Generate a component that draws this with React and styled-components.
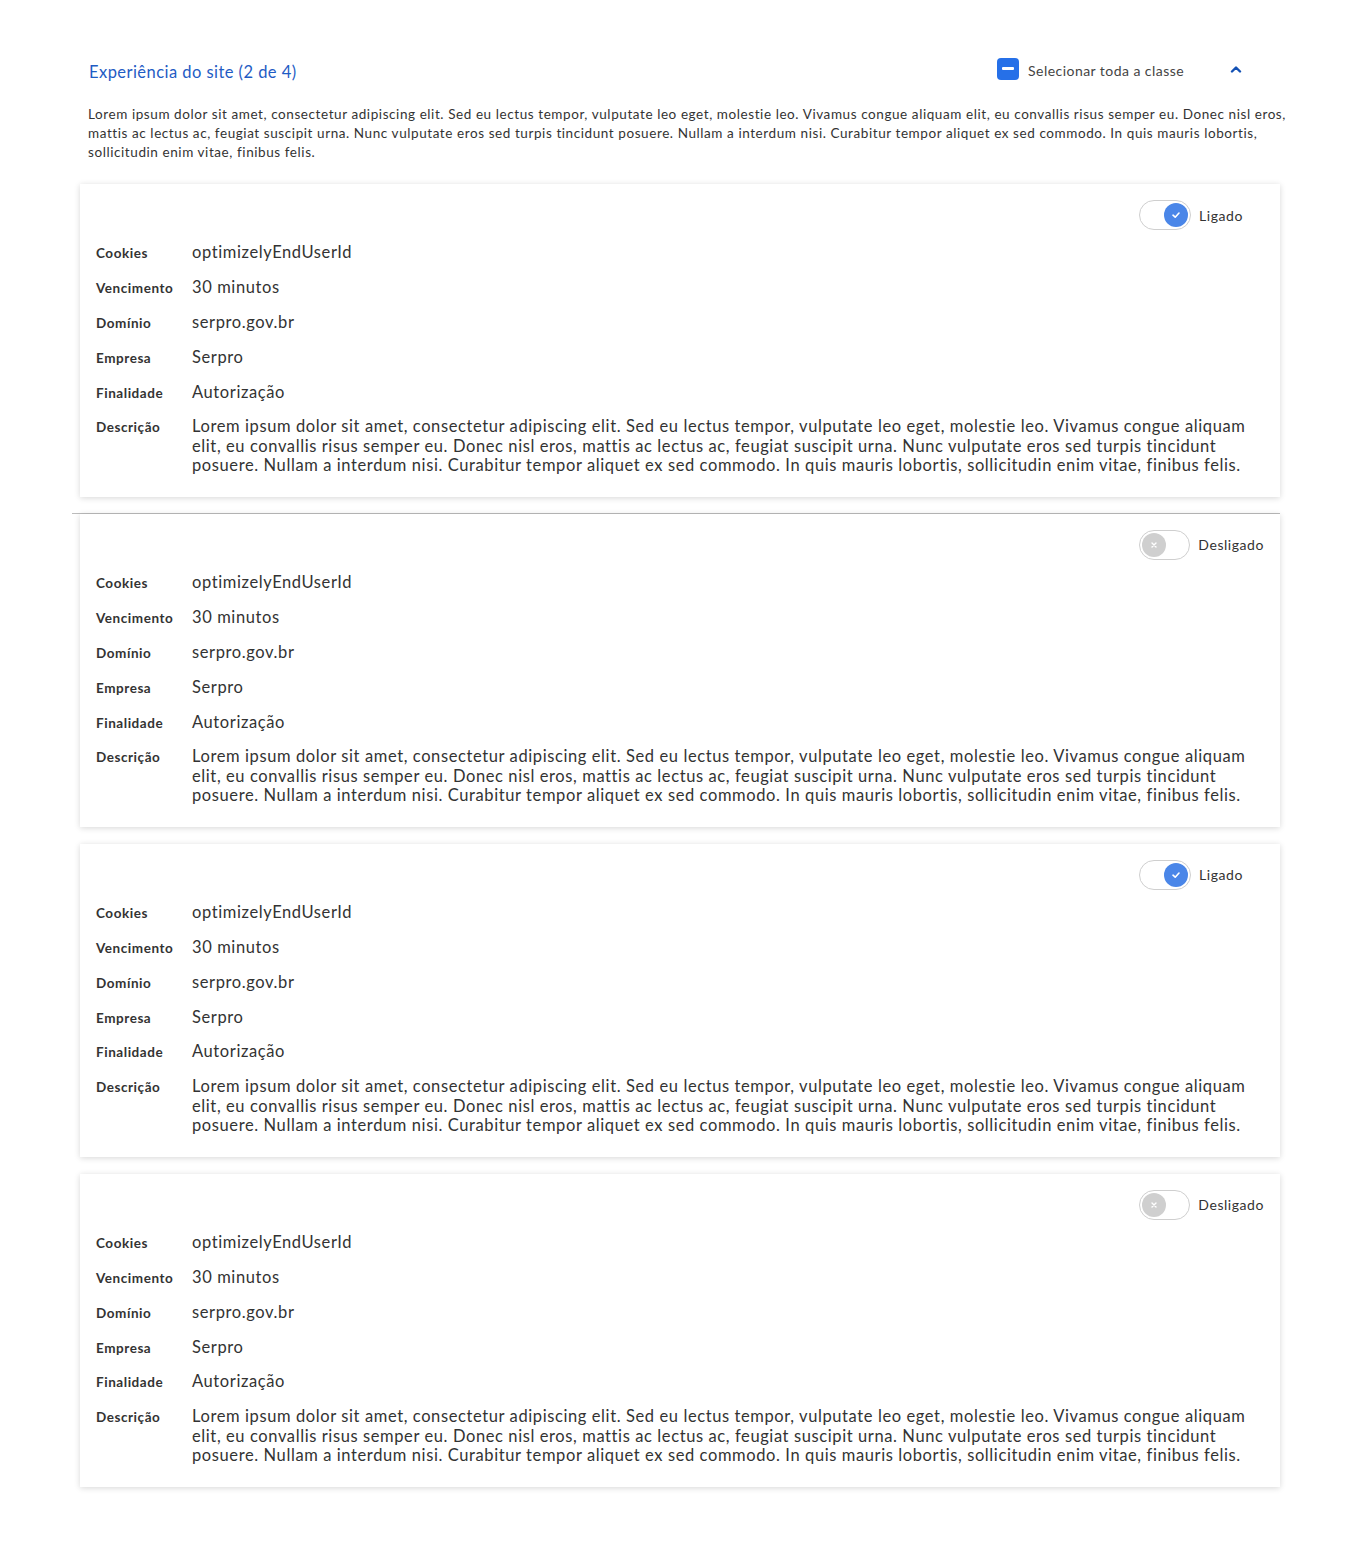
import React from 'react';
import styled, { createGlobalStyle } from 'styled-components';

const GlobalStyle = createGlobalStyle`
  body {
    margin: 0;
    background: #fff;
    font-family: 'Lato', 'Open Sans', sans-serif;
    color: #333;
  }
`;

const LOREM_LINES = [
  'Lorem ipsum dolor sit amet, consectetur adipiscing elit. Sed eu lectus tempor, vulputate leo eget, molestie leo. Vivamus congue aliquam',
  'elit, eu convallis risus semper eu. Donec nisl eros, mattis ac lectus ac, feugiat suscipit urna. Nunc vulputate eros sed turpis tincidunt',
  'posuere. Nullam a interdum nisi. Curabitur tempor aliquet ex sed commodo. In quis mauris lobortis, sollicitudin enim vitae, finibus felis.'
];

const INTRO_LINES = [
  'Lorem ipsum dolor sit amet, consectetur adipiscing elit. Sed eu lectus tempor, vulputate leo eget, molestie leo. Vivamus congue aliquam elit, eu convallis risus semper eu. Donec nisl eros,',
  'mattis ac lectus ac, feugiat suscipit urna. Nunc vulputate eros sed turpis tincidunt posuere. Nullam a interdum nisi. Curabitur tempor aliquet ex sed commodo. In quis mauris lobortis,',
  'sollicitudin enim vitae, finibus felis.'
];

const COOKIES = [
  { on: true, divider: false },
  { on: false, divider: true },
  { on: true, divider: false },
  { on: false, divider: false }
];

const Page = styled.div`
  padding: 50px 0 60px 80px;
  width: 1200px;
`;

const Header = styled.div`
  display: flex;
  align-items: center;
  padding: 0 0 0 9px;
  height: 40px;
`;

const Title = styled.h2`
  margin: 4px 0 0;
  font-size: 16.5px;
  font-weight: 400;
  letter-spacing: 0.45px;
  color: #1f5cc4;
  flex: 1;
`;

const SelectAll = styled.label`
  display: flex;
  align-items: center;
  gap: 9px;
  font-size: 14px;
  letter-spacing: 0.45px;
  color: #444;
  cursor: pointer;
`;

const CheckBox = styled.span`
  width: 22px;
  height: 22px;
  margin-top: -3px;
  border-radius: 4px;
  background: #2670e8;
  display: flex;
  align-items: center;
  justify-content: center;
  &::after {
    content: '';
    width: 12px;
    height: 3px;
    border-radius: 1px;
    background: #fff;
  }
`;

const Chevron = styled.button`
  border: 0;
  background: none;
  padding: 0;
  margin: -3px 38px 0 46px;
  width: 12px;
  height: 12px;
  display: flex;
  align-items: center;
  justify-content: center;
  cursor: pointer;
`;

const Intro = styled.p`
  margin: 15px 0 0 8px;
  font-size: 13.5px;
  letter-spacing: 0.58px;
  line-height: 19px;
  color: #333;
  white-space: nowrap;
`;

const Line = styled.span`
  display: block;
`;

const List = styled.div`
  margin-top: 21px;
`;

const CardWrap = styled.div`
  & + & {
    margin-top: 16px;
  }
`;

const Divider = styled.div`
  height: 1px;
  margin-left: -8px;
  background: ${(props) => (props.visible ? '#bcbcbc' : 'transparent')};
`;

const Card = styled.section`
  background: #fff;
  box-shadow: 0 1px 6px rgba(0, 0, 0, 0.16);
  padding: 16px 16px 21px;
`;

const ToggleRow = styled.div`
  display: flex;
  justify-content: flex-end;
`;

const ToggleGroup = styled.div`
  width: 125px;
  display: flex;
  align-items: center;
  gap: 8px;
  font-size: 14px;
  letter-spacing: 0.55px;
  color: #333;
`;

const Track = styled.span`
  box-sizing: border-box;
  width: 52px;
  height: 30px;
  border: 1px solid #cfcfcf;
  border-radius: 15px;
  display: flex;
  align-items: center;
  justify-content: ${(props) => (props.on ? 'flex-end' : 'flex-start')};
  padding: 0 2px;
`;

const Knob = styled.span`
  width: 24px;
  height: 24px;
  border-radius: 50%;
  background: ${(props) => (props.on ? '#4a86e8' : '#cfcfcf')};
  display: flex;
  align-items: center;
  justify-content: center;
`;

const Rows = styled.dl`
  margin: 13px 0 0;
  display: grid;
  grid-template-columns: 96px 1fr;
  row-gap: 15.4px;
  align-items: baseline;
`;

const Term = styled.dt`
  font-size: 13.5px;
  font-weight: 700;
  letter-spacing: 0.55px;
  color: #333;
`;

const Value = styled.dd`
  margin: 0;
  font-size: 16.5px;
  letter-spacing: 0.6px;
  line-height: 19.5px;
  color: #333;
  white-space: nowrap;
`;

const Toggle = ({ on }) => (
  <ToggleGroup>
    <Track on={on}>
      <Knob on={on}>
        {on ? (
          <svg width="10" height="10" viewBox="0 0 10 10">
            <path d="M2 5.2 L4.2 7.2 L8 3" fill="none" stroke="#fff" strokeWidth="1.6" strokeLinecap="round" strokeLinejoin="round" />
          </svg>
        ) : (
          <svg width="8" height="8" viewBox="0 0 8 8">
            <path d="M2 2 L6 6 M6 2 L2 6" stroke="#fff" strokeWidth="1.4" strokeLinecap="round" />
          </svg>
        )}
      </Knob>
    </Track>
    {on ? 'Ligado' : 'Desligado'}
  </ToggleGroup>
);

const CookieCard = ({ on }) => (
  <Card>
    <ToggleRow>
      <Toggle on={on} />
    </ToggleRow>
    <Rows>
      <Term>Cookies</Term>
      <Value>optimizelyEndUserId</Value>
      <Term>Vencimento</Term>
      <Value>30 minutos</Value>
      <Term>Domínio</Term>
      <Value>serpro.gov.br</Value>
      <Term>Empresa</Term>
      <Value>Serpro</Value>
      <Term>Finalidade</Term>
      <Value>Autorização</Value>
      <Term>Descrição</Term>
      <Value>
        {LOREM_LINES.map((l) => <Line key={l}>{l}</Line>)}
      </Value>
    </Rows>
  </Card>
);

const App = () => (
  <>
    <GlobalStyle />
    <Page>
      <Header>
        <Title>Experiência do site (2 de 4)</Title>
        <SelectAll>
          <CheckBox />
          Selecionar toda a classe
        </SelectAll>
        <Chevron aria-label="Recolher">
          <svg width="12" height="8" viewBox="0 0 12 8">
            <path d="M2 6.5 L6 2.5 L10 6.5" fill="none" stroke="#1351b4" strokeWidth="2.4" strokeLinecap="round" strokeLinejoin="round" />
          </svg>
        </Chevron>
      </Header>
      <Intro>
        {INTRO_LINES.map((l) => <Line key={l}>{l}</Line>)}
      </Intro>
      <List>
        {COOKIES.map((c, i) => (
          <CardWrap key={i}>
            <Divider visible={c.divider} />
            <CookieCard on={c.on} />
          </CardWrap>
        ))}
      </List>
    </Page>
  </>
);

export default App;
